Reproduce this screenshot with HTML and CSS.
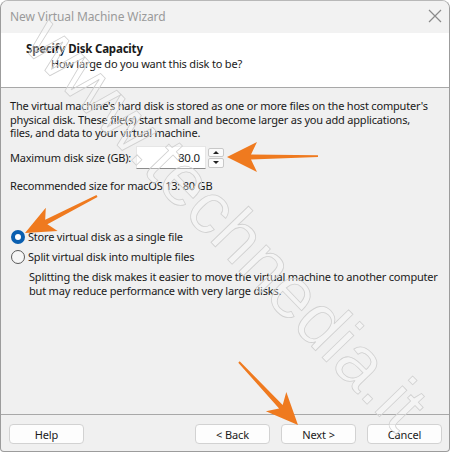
FILE: index.html
```html
<!DOCTYPE html>
<html>
<head>
<meta charset="utf-8">
<link rel="stylesheet" href="styles.css">
</head>
<body>
<div class="window">
  <div class="titlebar">
    <span class="title">New Virtual Machine Wizard</span>
    <svg class="close" width="14" height="14" viewBox="0 0 14 14"><path d="M1 1L13 13M13 1L1 13" stroke="#8a8a8a" stroke-width="1.2" fill="none"/></svg>
  </div>
  <div class="header">
    <div class="h-title">Specify Disk Capacity</div>
    <div class="h-sub">How large do you want this disk to be?</div>
  </div>
  <div class="content">
    <p class="para">The virtual machine's hard disk is stored as one or more files on the host computer's physical disk. These file(s) start small and become larger as you add applications, files, and data to your virtual machine.</p>
    <div class="spin-row">
      <span class="label">Maximum disk size (GB):</span>
      <div class="spinbox">
        <div class="spin-value">80.0</div>
        <div class="spin-btns">
          <div class="spin-btn"><span class="tri up"></span></div>
          <div class="spin-btn"><span class="tri down"></span></div>
        </div>
      </div>
    </div>
    <div class="recommend">Recommended size for macOS 13: 80 GB</div>
    <div class="radio-row first">
      <span class="radio checked"></span>
      <span>Store virtual disk as a single file</span>
    </div>
    <div class="radio-row">
      <span class="radio"></span>
      <span>Split virtual disk into multiple files</span>
    </div>
    <p class="desc">Splitting the disk makes it easier to move the virtual machine to another computer but may reduce performance with very large disks.</p>
  </div>
  <div class="footer">
    <button class="btn">Help</button>
    <div class="nav">
      <button class="btn">&lt; Back</button>
      <button class="btn">Next &gt;</button>
      <button class="btn">Cancel</button>
    </div>
  </div>
  <div class="watermark">www.technedia.it</div>
  <svg class="arrows" width="450" height="452" viewBox="0 0 450 452">
    <polygon fill="#ef7a1f" points="227,157 257,142 251,154.5 318,155.3 318,157 251,159.5 257,172"/>
    <polygon fill="#ef7a1f" points="25,233 45.8,207.7 45.2,219.8 96.5,195.1 97.5,196.9 47.4,224.2 57.6,230.9"/>
    <polygon fill="#ef7a1f" points="298,425 265.9,411.2 279.1,408.5 238.3,362.7 239.7,361.3 282.7,405 286.3,392"/>
  </svg>
</div>
</body>
</html>
```
FILE: styles.css
```css
* { box-sizing: border-box; }
html, body { margin: 0; padding: 0; background: #ffffff; }
body {
  font-family: "Noto Sans", "Open Sans", "Liberation Sans", sans-serif;
  font-size: 11px;
  letter-spacing: -0.2px;
  color: #1a1a1a;
}
.window {
  position: relative;
  width: 450px;
  height: 452px;
  background: #f0f0f0;
  border: 1px solid #9c9c9c;
  border-top-color: #b8b8b8;
  border-radius: 8px 8px 4px 4px;
  display: flex;
  flex-direction: column;
  overflow: hidden;
}
.titlebar {
  height: 32px;
  display: flex;
  align-items: center;
  justify-content: space-between;
  padding: 0 6px 0 9px;
  background: #f2f2f2;
}
.title {
  font-size: 12px;
  letter-spacing: -0.1px;
  color: #9a9a9a;
  margin-top: -2px;
}
.close { margin-right: 1px; margin-top: -2px; }
.header {
  height: 55px;
  background: #ffffff;
  border-bottom: 1px solid #a8a8a8;
  padding: 8px 0 0 25px;
}
.h-title {
  font-weight: bold;
  font-size: 11.5px;
  line-height: 15px;
}
.h-sub {
  margin-left: 25px;
  line-height: 15px;
}
.content {
  flex: 1;
  padding: 11px 16px 0 9px;
}
.para {
  margin: 0;
  line-height: 13.5px;
}
.spin-row {
  display: flex;
  align-items: center;
  margin-top: 6px;
  height: 24px;
}
.label { width: 126px; flex: none; }
.spinbox { display: flex; align-items: center; }
.spin-value {
  width: 70px;
  height: 23px;
  background: #ffffff;
  border: 1px solid #e6e6e6;
  border-bottom-color: #8c8c8c;
  text-align: right;
  padding-right: 5px;
  line-height: 21px;
  font-size: 11.5px;
}
.spin-btns {
  display: flex;
  flex-direction: column;
  gap: 1px;
  margin-left: 2px;
}
.spin-btn {
  width: 16px;
  height: 9.5px;
  background: #fbfbfb;
  border: 1px solid #c8c8c8;
  border-radius: 2px;
  display: flex;
  align-items: center;
  justify-content: center;
}
.tri { width: 0; height: 0; border-left: 3px solid transparent; border-right: 3px solid transparent; }
.tri.up { border-bottom: 3px solid #222; }
.tri.down { border-top: 3px solid #222; }
.recommend {
  margin-top: 9px;
  line-height: 14px;
}
.radio-row {
  display: flex;
  align-items: center;
  gap: 3px;
  height: 20px;
  margin-left: 1px;
}
.radio-row.first { margin-top: 34px; }
.radio {
  width: 14px;
  height: 14px;
  border-radius: 50%;
  border: 1px solid #5a5a5a;
  background: #f6f6f6;
  flex: none;
}
.radio.checked {
  border: 4px solid #0a5fb0;
  background: #ffffff;
}
.desc {
  margin: 3px -8px 0 19px;
  line-height: 14px;
}
.footer {
  height: 37px;
  border-top: 1px solid #a8a8a8;
  display: flex;
  justify-content: space-between;
  padding: 9px 7px 0 8px;
}
.nav { display: flex; gap: 11px; }
.btn {
  width: 75px;
  height: 20px;
  background: #fdfdfd;
  border: 1px solid #d2d2d2;
  border-radius: 4px;
  font-family: inherit;
  font-size: 11px;
  letter-spacing: -0.1px;
  color: #1a1a1a;
  padding: 0;
}
.watermark {
  position: absolute;
  left: 226px;
  top: 222px;
  font-family: "Liberation Sans", sans-serif;
  font-size: 72px;
  letter-spacing: 0;
  line-height: 1;
  color: rgba(255,255,255,0.3);
  -webkit-text-stroke: 0.8px #d0d0d0;
  transform: translate(-50%, -50%) rotate(46deg);
  pointer-events: none;
  white-space: nowrap;
}
.arrows {
  position: absolute;
  left: -1px;
  top: -1px;
  pointer-events: none;
}
```
